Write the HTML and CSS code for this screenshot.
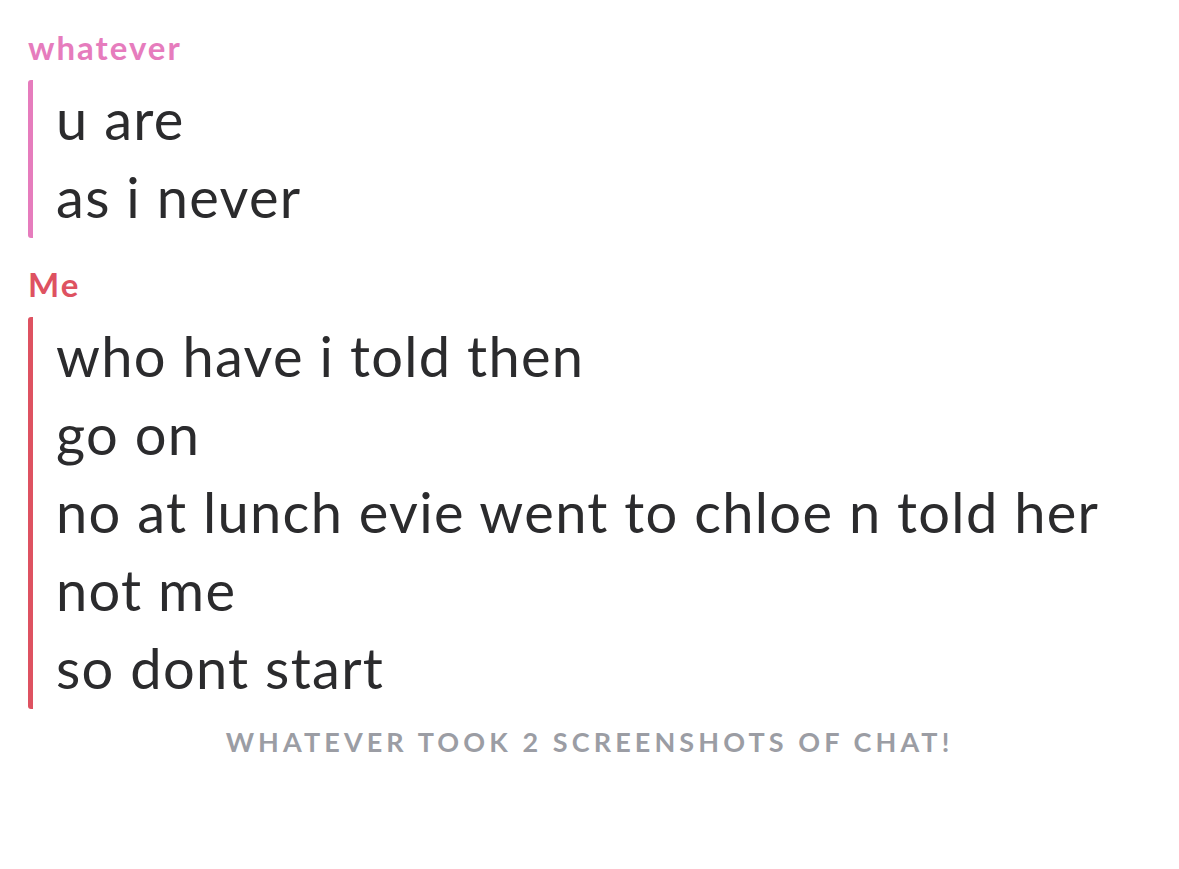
FILE: index.html
```html
<!DOCTYPE html>
<html>
<head>
<meta charset="utf-8">
<link rel="stylesheet" href="styles.css">
</head>
<body>
<div class="chat">
  <div class="group group-them">
    <div class="name">whatever</div>
    <div class="msgs">
      <div class="msg">u are</div>
      <div class="msg">as i never</div>
    </div>
  </div>
  <div class="group group-me">
    <div class="name">Me</div>
    <div class="msgs">
      <div class="msg">who have i told then</div>
      <div class="msg">go on</div>
      <div class="msg">no at lunch evie went to chloe n told her</div>
      <div class="msg">not me</div>
      <div class="msg">so dont start</div>
    </div>
  </div>
  <div class="notice">WHATEVER TOOK 2 SCREENSHOTS OF CHAT!</div>
</div>
</body>
</html>
```
FILE: styles.css
```css
html, body {
  margin: 0;
  padding: 0;
  background: #ffffff;
}
body {
  font-family: Lato, "Noto Sans", sans-serif;
  color: #2b2b2d;
}
.chat {
  padding: 27px 0 0 28px;
}
.name {
  font-size: 33px;
  font-weight: 700;
  letter-spacing: 2px;
  line-height: 40px;
}
.group-them .name { color: #e67cbd; }
.group-me .name { color: #de5261; }
.group-me { margin-top: 26px; }
.msgs {
  margin-top: 13px;
  border-left: 5px solid;
  border-radius: 3px;
  padding: 0 0 2px 23px;
}
.group-them .msgs { border-color: #e67cbd; }
.group-me .msgs { border-color: #de5261; }
.msg {
  font-size: 56px;
  letter-spacing: 1.3px;
  line-height: 78px;
}
.notice {
  text-align: center;
  margin-left: -28px;
  margin-top: 16px;
  font-size: 27px;
  font-weight: 700;
  letter-spacing: 4.1px;
  color: #9b9da4;
}
```
